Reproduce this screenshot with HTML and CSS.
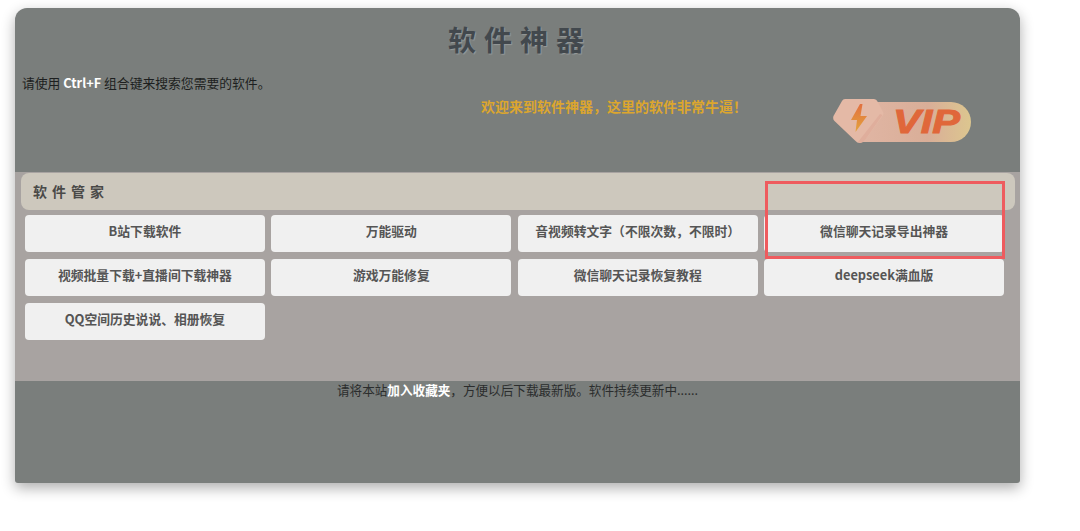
FILE: index.html
```html
<!DOCTYPE html>
<html lang="zh-CN">
<head>
<meta charset="utf-8">
<title>软件神器</title>
<link rel="stylesheet" href="styles.css">
</head>
<body>
<main class="panel">
  <header class="top">
    <h1 class="title">软件神器</h1>
    <p class="hint">请使用 <strong class="key">Ctrl+F</strong> 组合键来搜索您需要的软件。</p>
    <div class="promo">
      <p class="welcome">欢迎来到软件神器，这里的软件非常牛逼！</p>
      <svg class="vip" viewBox="0 0 138 44" width="138" height="44" aria-label="VIP">
        <defs>
          <linearGradient id="vipBar" x1="0" x2="1" y1="0" y2="0">
            <stop offset="0" stop-color="#e0b5a3"/>
            <stop offset="0.6" stop-color="#d9ae98"/>
            <stop offset="1" stop-color="#dcc68f"/>
          </linearGradient>
          <linearGradient id="vipBolt" x1="0" x2="0" y1="0" y2="1">
            <stop offset="0" stop-color="#e2703f"/>
            <stop offset="1" stop-color="#e3a33c"/>
          </linearGradient>
        </defs>
        <path d="M30 3H118a20 20 0 0 1 0 40H30z" fill="url(#vipBar)"/>
        <path d="M12 0H41q2.500 0 3.500 2.500L50 13q1 2-.5 4L32 41q-2 3-5 3t-5-2.500L1.500 22q-2-2-1-5L9 2q1-2 3-2z" fill="#e4b9a6"/>
        <path d="M49.500 16 32 41q-2 3-5 3l-2-1 22-28z" fill="#dfae9c"/>
        <path d="M27 5 18 21H24L22.500 33 34 17H27.500L29.500 5z" fill="url(#vipBolt)"/>
        <text class="vip-text" x="60" y="34" textLength="67" lengthAdjust="spacingAndGlyphs">VIP</text>
      </svg>
    </div>
  </header>

  <section class="tools">
    <h2 class="tools-head">软件管家</h2>
    <div class="grid">
      <a class="tool">B站下载软件</a>
      <a class="tool">万能驱动</a>
      <a class="tool">音视频转文字（不限次数，不限时）</a>
      <a class="tool">微信聊天记录导出神器</a>
      <a class="tool">视频批量下载+直播间下载神器</a>
      <a class="tool">游戏万能修复</a>
      <a class="tool">微信聊天记录恢复教程</a>
      <a class="tool">deepseek满血版</a>
      <a class="tool">QQ空间历史说说、相册恢复</a>
    </div>
    <div class="mark"></div>
  </section>

  <footer class="foot">请将本站<strong class="key">加入收藏夹</strong>，方便以后下载最新版。软件持续更新中......</footer>
</main>
</body>
</html>
```

FILE: styles.css
```css
* { box-sizing: border-box; }
html, body { height: 100%; }
body {
  margin: 0;
  padding: 8px 60px 0 15px;
  background: #fff;
  overflow: hidden;
  font-family: "Noto Sans CJK SC", "Noto Sans", sans-serif;
  font-size: 12.8px;
}
.panel {
  height: 475px;
  display: flex;
  flex-direction: column;
  background: #7a7e7c;
  border-radius: 12px 12px 3px 3px;
  box-shadow: 0 5px 14px rgba(0, 0, 0, 0.32);
}
.top { height: 164px; padding: 14px 7px 0 6px; }
.title {
  margin: 0;
  padding-left: 6px;
  text-align: center;
  font-size: 28px;
  line-height: 34px;
  letter-spacing: 8px;
  font-weight: 700;
  color: #42484d;
  text-shadow: 1px 1px 1px rgba(200, 205, 210, 0.35);
}
.hint { margin: 18px 0 0 1px; line-height: 18px; color: #1d1f20; }
.key { color: #fff; font-weight: 700; }
.promo { display: flex; align-items: flex-start; }
.welcome {
  margin: 5px 0 0 460px;
  width: 260px;
  line-height: 18px;
  white-space: nowrap;
  font-size: 14px;
  font-weight: 700;
  color: #dca62e;
}
.vip { margin: 7px 0 0 92px; flex: none; }
.vip-text {
  font-family: "Liberation Sans", sans-serif;
  font-size: 34px;
  font-weight: 700;
  font-style: italic;
  fill: #e0673a;
  stroke: #e0673a;
  stroke-width: 1px;
}
.tools {
  position: relative;
  height: 209px;
  background: #a8a3a1;
  padding: 1px 5px 0 6px;
}
.tools-head {
  margin: 0;
  height: 37px;
  padding: 0 0 2px 12px;
  display: flex;
  align-items: center;
  background: #cdc8bd;
  border-radius: 8px;
  font-size: 14px;
  font-weight: 700;
  letter-spacing: 5px;
  color: #4a4a48;
}
.grid {
  margin: 5px 11px 0 4px;
  display: grid;
  grid-template-columns: repeat(4, 1fr);
  grid-auto-rows: 37px;
  gap: 7px 6.500px;
}
.tool {
  display: flex;
  align-items: center;
  justify-content: center;
  padding-bottom: 6px;
  background: #f0f0f0;
  border-radius: 4px;
  font-weight: 700;
  color: #555;
  white-space: nowrap;
}
.mark {
  position: absolute;
  left: 750px;
  top: 9px;
  width: 240px;
  height: 78px;
  border: 3px solid #ee5b5e;
}
.foot {
  flex: 1;
  text-align: center;
  font-size: 12.6px;
  line-height: 18px;
  color: #2b2d2d;
}
```
